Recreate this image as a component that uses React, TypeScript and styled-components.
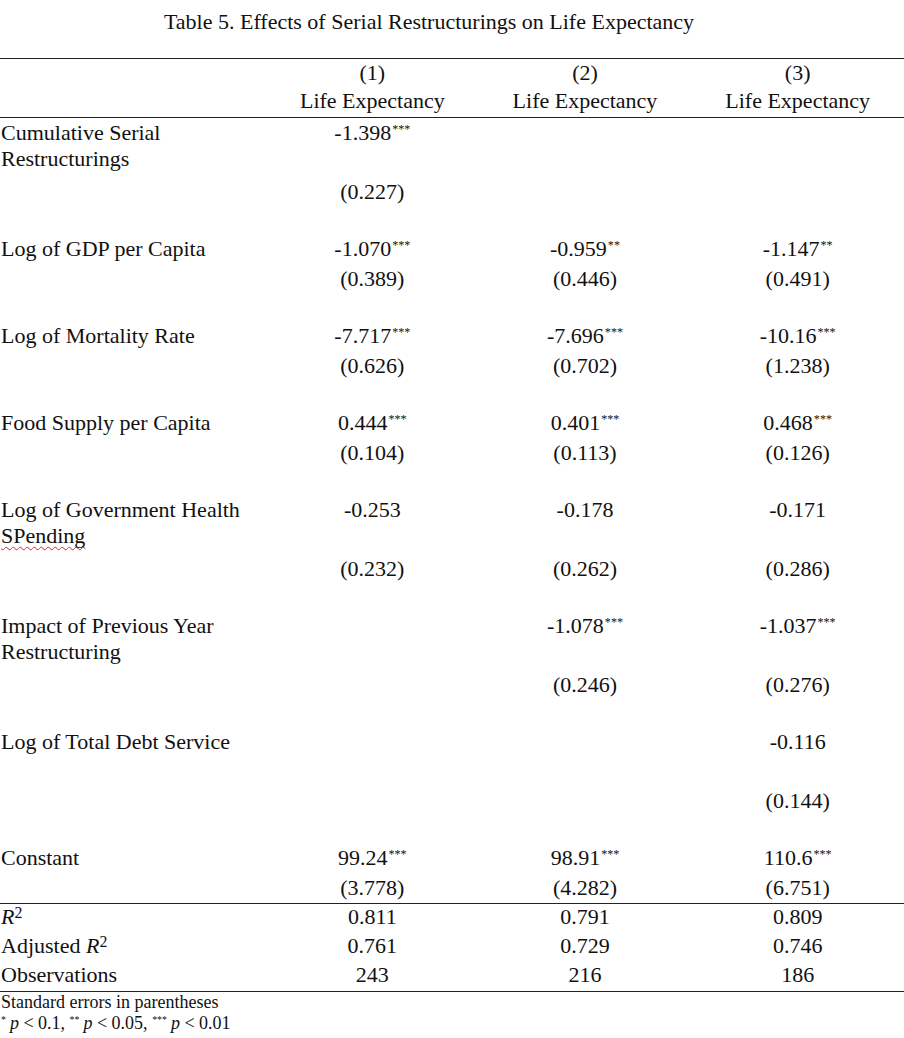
import React from "react";
import styled, { createGlobalStyle } from "styled-components";

const GlobalStyle = createGlobalStyle`
  html, body { margin: 0; padding: 0; background: #fff; }
  body {
    font-family: "Liberation Serif", "Times New Roman", serif;
    color: #111;
  }
  * { box-sizing: border-box; }
`;

const Page = styled.div`
  width: 904px;
`;

const Title = styled.div`
  font-size: 22px;
  line-height: 26px;
  padding: 9px 46px 0 0;
  margin-bottom: 23px;
  text-align: center;
`;

const Header = styled.div`
  border-top: 1px solid #222;
  border-bottom: 1px solid #222;
  padding-bottom: 2px;
`;

const Grid = styled.div`
  display: grid;
  grid-template-columns: 266px repeat(3, 1fr);
  font-size: 22px;
`;

const HeaderRow = styled(Grid)`
  line-height: 28px;
`;

const Row = styled(Grid)<{ $tall?: boolean }>`
  line-height: 26px;
  padding: 2px 0;
  height: ${(p) => (p.$tall ? 59 : 30)}px;
`;

const StatRow = styled(Grid)`
  line-height: 26px;
  padding: 0 0 3px;
`;

const Label = styled.div`
  padding-left: 1px;
`;

const Cell = styled.div`
  text-align: center;
  white-space: nowrap;
`;

const Spacer = styled.div`
  height: 27px;
`;

const Stats = styled.div`
  border-top: 1px solid #222;
  border-bottom: 1px solid #222;
`;

const Stars = styled.sup`
  font-size: 0.55em;
  vertical-align: 0.6em;
  line-height: 0;
  margin-left: 1px;
`;

const Squiggle = styled.span`
  text-decoration: underline wavy #d9282a;
  text-decoration-thickness: 1px;
  text-underline-offset: 3px;
  text-decoration-skip-ink: none;
`;

const Ital = styled.i`
  font-style: italic;
`;

const Exp = styled.sup`
  font-size: 0.72em;
  vertical-align: 0.38em;
  line-height: 0;
`;

const Notes = styled.div`
  font-size: 18px;
  line-height: 21px;
  padding-left: 1px;
`;

const NoteStars = styled.sup`
  font-size: 0.55em;
  vertical-align: 0.6em;
  line-height: 0;
  margin-right: 4px;
`;

type Coef = [string, string?] | null;

interface VarRow {
  label: React.ReactNode[];
  coef: Coef[];
  se: string[];
  tall?: boolean;
}

const rows: VarRow[] = [
  {
    label: ["Cumulative Serial", "Restructurings"],
    coef: [["-1.398", "***"], null, null],
    se: ["(0.227)", "", ""],
  },
  {
    label: ["Log of GDP per Capita"],
    coef: [["-1.070", "***"], ["-0.959", "**"], ["-1.147", "**"]],
    se: ["(0.389)", "(0.446)", "(0.491)"],
  },
  {
    label: ["Log of Mortality Rate"],
    coef: [["-7.717", "***"], ["-7.696", "***"], ["-10.16", "***"]],
    se: ["(0.626)", "(0.702)", "(1.238)"],
  },
  {
    label: ["Food Supply per Capita"],
    coef: [["0.444", "***"], ["0.401", "***"], ["0.468", "***"]],
    se: ["(0.104)", "(0.113)", "(0.126)"],
  },
  {
    label: ["Log of Government Health", <Squiggle key="s">SPending</Squiggle>],
    coef: [["-0.253"], ["-0.178"], ["-0.171"]],
    se: ["(0.232)", "(0.262)", "(0.286)"],
  },
  {
    label: ["Impact of Previous Year", "Restructuring"],
    coef: [null, ["-1.078", "***"], ["-1.037", "***"]],
    se: ["", "(0.246)", "(0.276)"],
  },
  {
    label: ["Log of Total Debt Service"],
    coef: [null, null, ["-0.116"]],
    se: ["", "", "(0.144)"],
    tall: true,
  },
  {
    label: ["Constant"],
    coef: [["99.24", "***"], ["98.91", "***"], ["110.6", "***"]],
    se: ["(3.778)", "(4.282)", "(6.751)"],
  },
];

const stats: { label: React.ReactNode; values: string[] }[] = [
  {
    label: (
      <>
        <Ital>R</Ital>
        <Exp>2</Exp>
      </>
    ),
    values: ["0.811", "0.791", "0.809"],
  },
  {
    label: (
      <>
        Adjusted <Ital>R</Ital>
        <Exp>2</Exp>
      </>
    ),
    values: ["0.761", "0.729", "0.746"],
  },
  { label: "Observations", values: ["243", "216", "186"] },
];

function CoefCell({ c }: { c: Coef }) {
  if (!c) return <Cell />;
  return (
    <Cell>
      {c[0]}
      {c[1] ? <Stars>{c[1]}</Stars> : null}
    </Cell>
  );
}

export default function App() {
  return (
    <Page>
      <GlobalStyle />
      <Title>Table 5. Effects of Serial Restructurings on Life Expectancy</Title>
      <Header>
        <HeaderRow>
          <Label />
          <Cell>(1)</Cell>
          <Cell>(2)</Cell>
          <Cell>(3)</Cell>
        </HeaderRow>
        <HeaderRow>
          <Label />
          <Cell>Life Expectancy</Cell>
          <Cell>Life Expectancy</Cell>
          <Cell>Life Expectancy</Cell>
        </HeaderRow>
      </Header>
      <div>
        {rows.map((r, i) => (
          <React.Fragment key={i}>
            <Row $tall={r.label.length > 1 || r.tall}>
              <Label>
                {r.label.map((l, j) => (
                  <div key={j}>{l}</div>
                ))}
              </Label>
              {r.coef.map((c, j) => (
                <CoefCell key={j} c={c} />
              ))}
            </Row>
            <Row>
              <Label />
              {r.se.map((s, j) => (
                <Cell key={j}>{s}</Cell>
              ))}
            </Row>
            {i < rows.length - 1 ? <Spacer /> : null}
          </React.Fragment>
        ))}
      </div>
      <Stats>
        {stats.map((s, i) => (
          <StatRow key={i}>
            <Label>{s.label}</Label>
            {s.values.map((v, j) => (
              <Cell key={j}>{v}</Cell>
            ))}
          </StatRow>
        ))}
      </Stats>
      <Notes>
        <div>Standard errors in parentheses</div>
        <div>
          <NoteStars>*</NoteStars>
          <Ital>p</Ital> &lt; 0.1, <NoteStars>**</NoteStars>
          <Ital>p</Ital> &lt; 0.05, <NoteStars>***</NoteStars>
          <Ital>p</Ital> &lt; 0.01
        </div>
      </Notes>
    </Page>
  );
}
